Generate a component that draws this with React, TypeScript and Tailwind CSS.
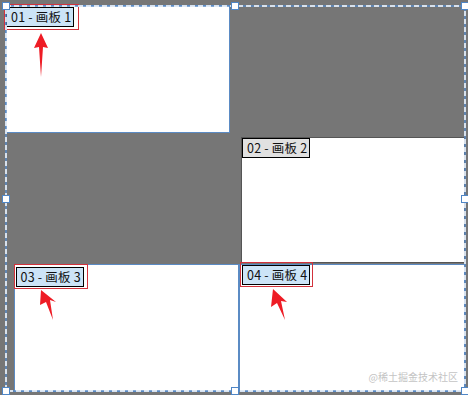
import React from 'react';

const FONT = '"Noto Sans CJK SC", "Noto Sans", sans-serif';

interface LabelProps {
  text: string;
  active?: boolean;
}

// artboard name tag, light blue when the board is in the selection
const Label: React.FC<LabelProps> = ({ text, active = true }) => (
  <div
    className={`h-[20px] w-[68px] border border-black pl-[4px] text-[12.5px] leading-[18px] tracking-[0.2px] text-[#111] whitespace-nowrap ${
      active ? 'bg-[#cce4f7]' : 'bg-[#e1e1e1]'
    }`}
    style={{ fontFamily: FONT }}
  >
    {text}
  </div>
);

const Arrow: React.FC<{ points: string }> = ({ points }) => (
  <svg className="absolute inset-0 pointer-events-none" width={468} height={395}>
    <polygon points={points} fill="#ee1c25" />
  </svg>
);

const Handle: React.FC<{ x: number; y: number }> = ({ x, y }) => (
  <div
    className="absolute w-[8px] h-[8px] bg-white border border-[#4f86c6]"
    style={{ left: x - 4, top: y - 4 }}
  />
);

export default function App() {
  return (
    <div className="relative w-[468px] h-[395px] bg-[#767676] overflow-hidden flex flex-col pt-[5px]">
      {/* row 1 */}
      <div className="ml-[5px] w-[225px] h-[128px] bg-white border-[1.5px] border-[#5b8bc4] flex items-start">
        <div className="-ml-[2px] -mt-[2px] border border-[#d2323c] pt-[2px] pl-[1px] pr-[4px] pb-[2px]">
          <Label text="01 - 画板 1" />
        </div>
      </div>

      {/* row 2 */}
      <div className="mt-[4px] ml-[241px] w-[224px] h-[126px] bg-white border border-[#555] flex items-start">
        <Label text="02 - 画板 2" active={false} />
      </div>

      {/* row 3 */}
      <div className="mt-[1px] flex">
        <div className="ml-[14px] w-[225px] h-[128px] bg-white border-[1.5px] border-[#5b8bc4] flex items-start">
          <div className="-ml-[1.5px] -mt-[1.5px] border border-[#d2323c] pt-[2px] pl-[1px] pr-[3px] pb-[1px]">
            <Label text="03 - 画板 3" />
          </div>
        </div>
        <div className="w-[226px] h-[128px] bg-white border-[1.5px] border-[#5b8bc4] flex items-start">
          <div className="-mt-[3px] border border-[#d2323c] pt-[2px] pl-[1px] pr-[2px] pb-[1px]">
            <Label text="04 - 画板 4" />
          </div>
        </div>
      </div>

      {/* selection box */}
      <svg className="absolute inset-0 pointer-events-none" width={468} height={395}>
        <rect x={6} y={6} width={459} height={385} fill="none" stroke="#5b8bc4" strokeWidth={1.5} />
        <rect x={6} y={6} width={459} height={385} fill="none" stroke="#ffffff" strokeWidth={1.5} strokeDasharray="5 3" />
      </svg>
      {[6, 235, 465].map((x) =>
        [6, 199, 391].map((y) => (x === 235 && y === 199 ? null : <Handle key={`${x}-${y}`} x={x} y={y} />))
      )}

      {/* arrows */}
      <Arrow points="41,33 34,48 39,47 41,77 43,47 48,48" />
      <Arrow points="41,290 40,305 46,302 53,320 50,300 56,302" />
      <Arrow points="273,289 271,307 277,303 285,320 281,301 287,302" />

      {/* watermark */}
      <div
        className="absolute right-[10px] bottom-[11px] text-[10px] leading-[14px] text-[#c4c4c4] whitespace-nowrap"
        style={{ fontFamily: FONT }}
      >
        @稀土掘金技术社区
      </div>
    </div>
  );
}
